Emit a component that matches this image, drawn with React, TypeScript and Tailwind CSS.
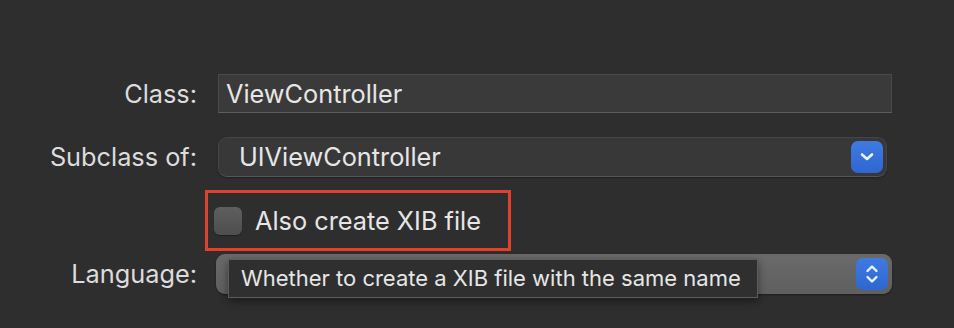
import React from "react";

const ChevronDown = () => (
    <svg width="16" height="10" viewBox="0 0 16 10" fill="none">
        <path d="M3 2.5 L8 7 L13 2.5" stroke="#eef3ff" strokeWidth="2.6" strokeLinecap="round" strokeLinejoin="round" />
    </svg>
);

const UpDown = () => (
    <svg width="16" height="24" viewBox="0 0 16 24" fill="none">
        <path d="M3.5 9 L8 4.5 L12.5 9" stroke="#eef3ff" strokeWidth="2.4" strokeLinecap="round" strokeLinejoin="round" />
        <path d="M3.5 15 L8 19.5 L12.5 15" stroke="#eef3ff" strokeWidth="2.4" strokeLinecap="round" strokeLinejoin="round" />
    </svg>
);

const Label = ({ children }: { children: React.ReactNode }) => (
    <div className="w-[197px] shrink-0 text-right text-[25.3px] text-[#dcdcdc]">{children}</div>
);

export default function App() {
    return (
        <div
            className="w-[954px] h-[328px] bg-[#2e2e2e] pt-[74px] overflow-hidden"
            style={{ fontFamily: "Inter, 'Noto Sans', sans-serif" }}
        >
            {/* Class */}
            <div className="flex items-center h-[39px]">
                <Label>Class:</Label>
                <div className="ml-[21px] w-[674px] h-[39px] bg-[#3a3a3a] border border-[#4a4a4a] border-b-[#5e5e5e] flex items-center pl-[7px] text-[25.3px] text-[#e6e6e6]">
                    ViewController
                </div>
            </div>

            {/* Subclass of */}
            <div className="flex items-center h-[40px] mt-[24px]">
                <Label>Subclass of:</Label>
                <div className="ml-[21px] w-[669px] h-[40px] rounded-[9px] bg-[#383838] border border-[#454545] border-b-[#555] shadow-[0_1px_2px_rgba(0,0,0,0.3)] flex items-center justify-between pl-[20px] pr-[3px]">
                    <span className="text-[25.3px] text-[#e6e6e6]">UIViewController</span>
                    <div className="w-[32px] h-[32px] rounded-[7px] bg-gradient-to-b from-[#3f7ae3] to-[#2f66cf] flex items-center justify-center">
                        <ChevronDown />
                    </div>
                </div>
            </div>

            {/* Also create XIB file */}
            <div className="ml-[205px] mt-[13px] w-[306px] h-[61px] border-[3px] border-[#e3402b] flex items-center pl-[6px]">
                <div className="w-[28px] h-[28px] rounded-[6px] bg-gradient-to-b from-[#5e5e5e] to-[#4e4e4e] shadow-[0_1px_1px_rgba(0,0,0,0.35)]" />
                <span className="ml-[13px] text-[25.3px] text-[#e6e6e6]">Also create XIB file</span>
            </div>

            {/* Language */}
            <div className="flex items-center h-[40px] mt-[3px]">
                <Label>Language:</Label>
                <div className="relative ml-[19px] w-[676px] h-[40px] rounded-[9px] bg-gradient-to-b from-[#6a6a6a] to-[#5f5f5f] shadow-[0_1px_2px_rgba(0,0,0,0.4)] flex items-center justify-end pr-[4px]">
                    <div className="w-[32px] h-[32px] rounded-[7px] bg-gradient-to-b from-[#3f7ae3] to-[#2f66cf] flex items-center justify-center">
                        <UpDown />
                    </div>
                    <div className="absolute left-[12px] top-[5px] w-[530px] h-[39px] bg-[#2f2f2f] border border-[#5c5c5c] shadow-[0_3px_8px_rgba(0,0,0,0.45)] flex items-center pl-[12px] text-[22px] text-[#e6e6e6] whitespace-nowrap">
                        Whether to create a XIB file with the same name
                    </div>
                </div>
            </div>
        </div>
    );
}
